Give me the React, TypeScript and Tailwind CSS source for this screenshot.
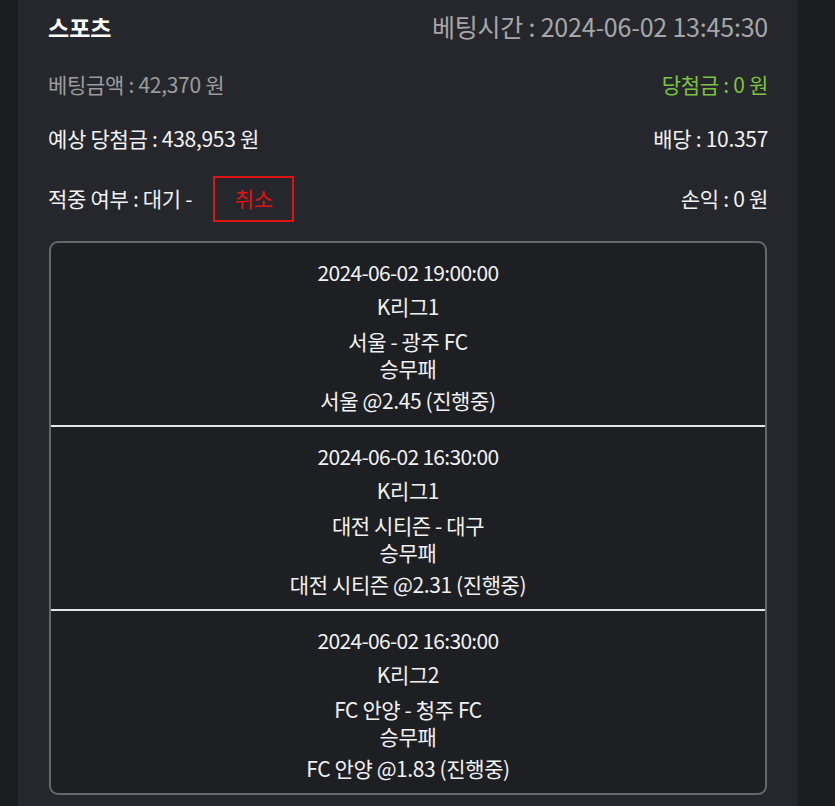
import React from "react";

const font = { fontFamily: '"Noto Sans CJK KR", "Noto Sans", sans-serif' };

type Bet = { date: string; league: string; teams: string; market: string; pick: string };

const bets: Bet[] = [
  { date: "2024-06-02 19:00:00", league: "K리그1", teams: "서울 - 광주 FC", market: "승무패", pick: "서울 @2.45 (진행중)" },
  { date: "2024-06-02 16:30:00", league: "K리그1", teams: "대전 시티즌 - 대구", market: "승무패", pick: "대전 시티즌 @2.31 (진행중)" },
  { date: "2024-06-02 16:30:00", league: "K리그2", teams: "FC 안양 - 청주 FC", market: "승무패", pick: "FC 안양 @1.83 (진행중)" },
];

function Section({ b, last }: { b: Bet; last: boolean }) {
  return (
    <div className={`flex flex-col items-center pt-[15px] pb-[10px] text-[21px] text-[#f2f2f2] tracking-[-0.4px] ${last ? "" : "border-b-2 border-[#e6e6e6]"}`}>
      <div className="leading-[28px] tracking-[-0.7px]">{b.date}</div>
      <div className="leading-[28px] mt-[6px]">{b.league}</div>
      <div className="leading-[27px] mt-[8px]">{b.teams}</div>
      <div className="leading-[27px]">{b.market}</div>
      <div className="leading-[30px] mt-[3px]">{b.pick}</div>
    </div>
  );
}

export default function App() {
  return (
    <div className="w-full min-h-[806px] bg-[#1c1d21] flex" style={font}>
      <div className="ml-[18px] w-[779px] min-h-[806px] bg-[#26272c] pl-[30px] pr-[29px]">
        <div className="h-[46px] mt-[4px] flex items-center justify-between">
          <div className="text-[23px] font-bold text-white">스포츠</div>
          <div className="text-[25px] text-[#a6a6a8] tracking-[-0.2px]">베팅시간 : 2024-06-02 13:45:30</div>
        </div>
        <div className="h-[46px] mt-[12px] flex items-center justify-between text-[21px] tracking-[-0.3px]">
          <div className="text-[#9c9c9e]">베팅금액 : 42,370 원</div>
          <div className="text-[#7cc23e]">당첨금 : 0 원</div>
        </div>
        <div className="h-[46px] mt-[8px] flex items-center justify-between text-[21px] text-[#f2f2f2] tracking-[-0.3px]">
          <div>예상 당첨금 : 438,953 원</div>
          <div>배당 : 10.357</div>
        </div>
        <div className="h-[46px] mt-[14px] flex items-center justify-between text-[21px] text-[#f2f2f2] tracking-[-0.3px]">
          <div className="flex items-center">
            <span>적중 여부 : 대기 -</span>
            <div className="ml-[21px] w-[81px] h-[46px] border-2 border-[#e31212] flex items-center justify-center text-[#e31212]">취소</div>
          </div>
          <div>손익 : 0 원</div>
        </div>
        <div className="mt-[19px] ml-[1px] w-[718px] border-2 border-[#66666b] rounded-[9px] bg-[#1e1f23] overflow-hidden">
          {bets.map((b, i) => (
            <Section key={i} b={b} last={i === bets.length - 1} />
          ))}
        </div>
      </div>
    </div>
  );
}
